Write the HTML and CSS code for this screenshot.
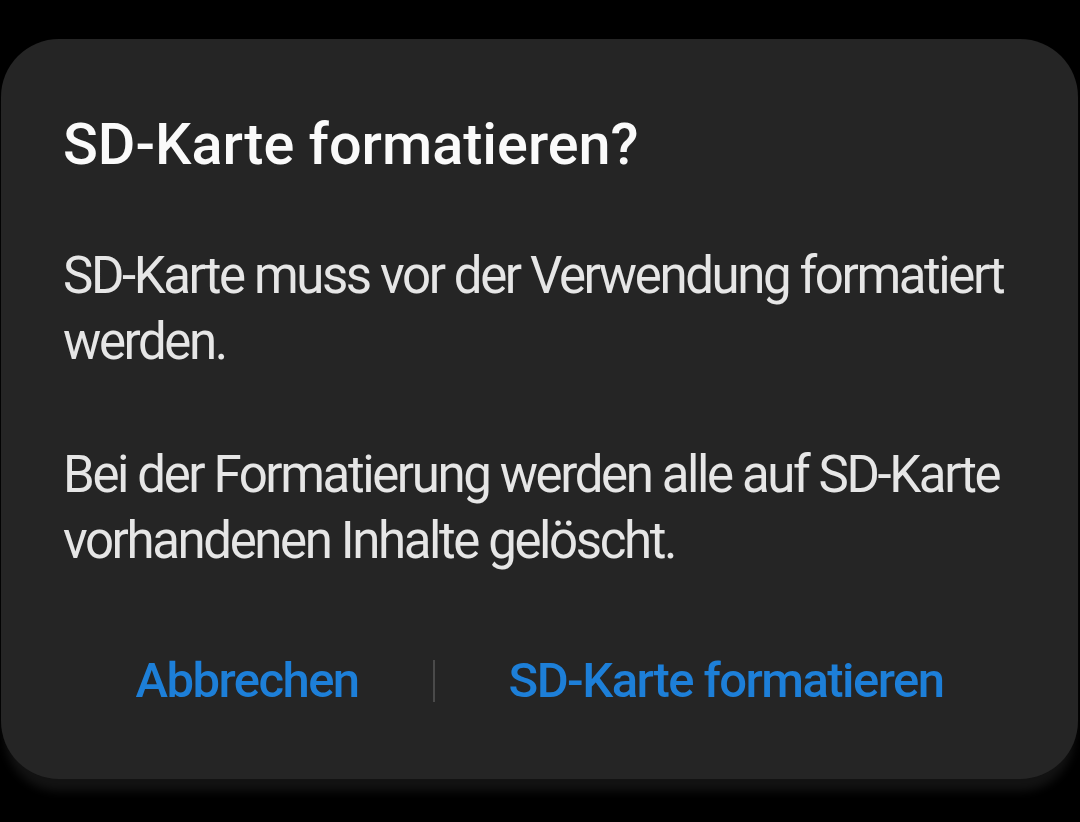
FILE: index.html
```html
<!DOCTYPE html>
<html lang="de">
<head>
<meta charset="utf-8">
<title>SD-Karte formatieren?</title>
<link rel="stylesheet" href="styles.css">
</head>
<body>
<div class="screen">
  <div class="dialog">
    <h1 class="title">SD-Karte formatieren?</h1>
    <p class="body">SD-Karte muss vor der Verwendung formatiert werden.</p>
    <p class="body">Bei der Formatierung werden alle auf SD-Karte vorhandenen Inhalte gelöscht.</p>
    <div class="actions">
      <span class="btn">Abbrechen</span>
      <span class="divider"></span>
      <span class="btn">SD-Karte formatieren</span>
    </div>
  </div>
</div>
</body>
</html>
```

FILE: styles.css
```css
html, body {
  margin: 0;
  padding: 0;
  background: #000;
}
.screen {
  width: 1080px;
  height: 822px;
  padding-top: 39px;
  padding-left: 1px;
  box-sizing: border-box;
  font-family: Roboto, "Liberation Sans", sans-serif;
}
.dialog {
  width: 1077px;
  height: 740px;
  box-sizing: border-box;
  background: #252525;
  border-radius: 58px;
  padding: 76px 50px 0 62px;
  box-shadow: 0 16px 10px -4px #131313;
}
.title {
  margin: 0;
  font-size: 57.6px;
  line-height: 60px;
  font-weight: 500;
  letter-spacing: 0;
  color: #fafafa;
}
.body {
  margin: 67px 0 0 0;
  font-size: 51px;
  line-height: 66px;
  font-weight: 400;
  letter-spacing: -2.4px;
  color: #e6e6e6;
}
.title + .body {
  margin-top: 68px;
}
.actions {
  margin-top: 77px;
  display: flex;
  justify-content: center;
  align-items: center;
  gap: 74px;
  margin-left: -62px;
  margin-right: -50px;
}
.btn {
  font-size: 49px;
  line-height: 60px;
  font-weight: 500;
  letter-spacing: -1.55px;
  color: #1d7fd8;
}
.divider {
  width: 2px;
  height: 42px;
  background: #4a4a4a;
}
```
